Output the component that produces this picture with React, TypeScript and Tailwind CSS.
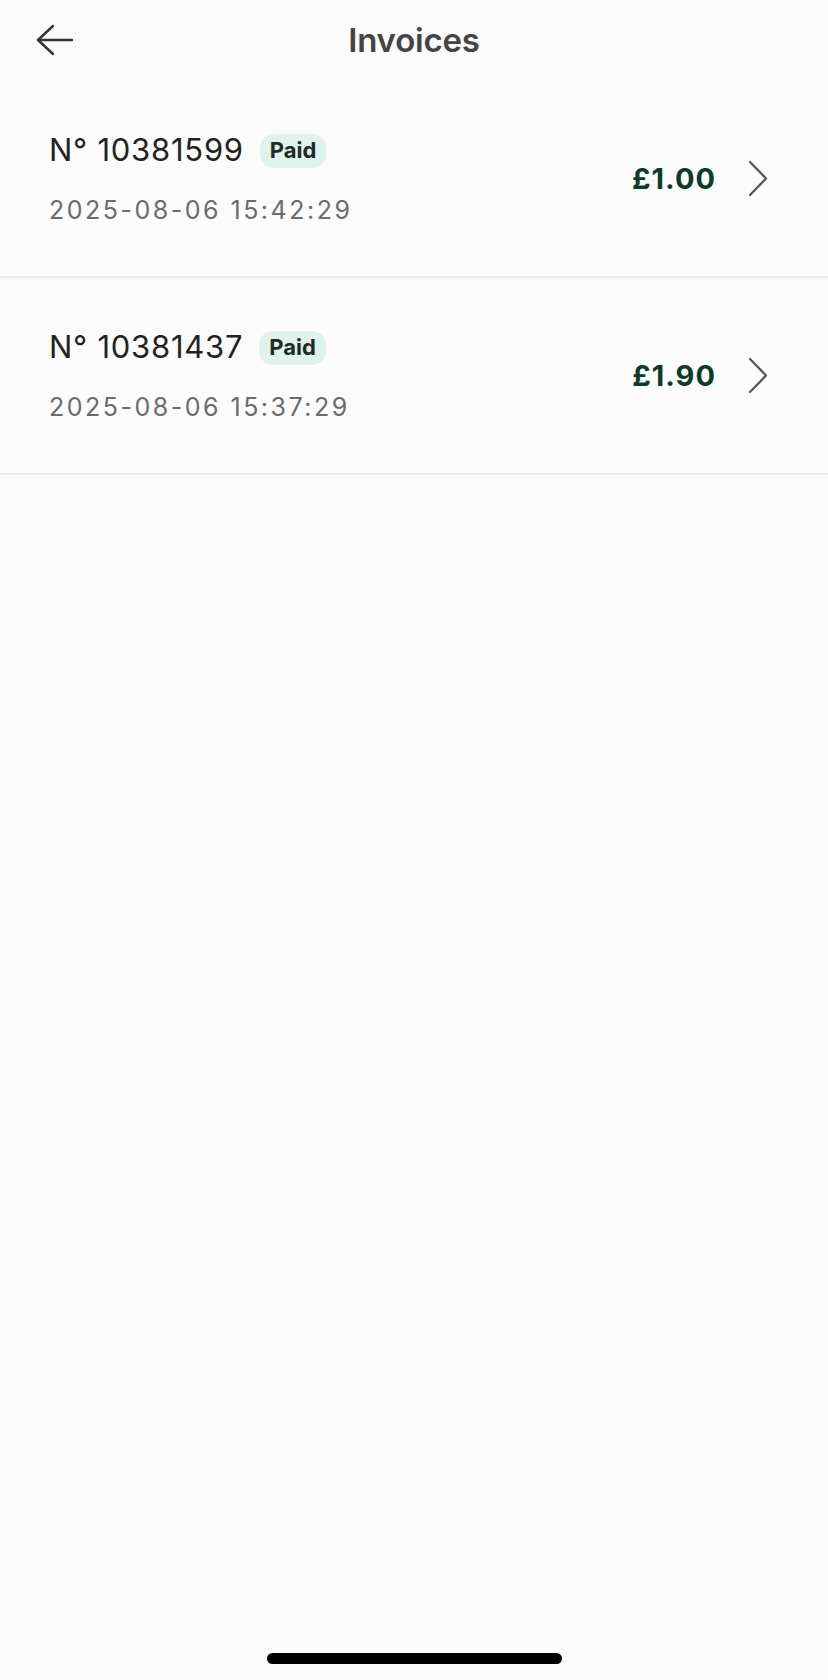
const invoices = [
  { id: "10381599", date: "2025-08-06 15:42:29", amount: "£1.00" },
  { id: "10381437", date: "2025-08-06 15:37:29", amount: "£1.90" },
];

function BackArrow() {
  return (
    <svg width="38" height="32" viewBox="0 0 38 32" fill="none" stroke="#333" strokeWidth="2.4" strokeLinecap="round" strokeLinejoin="round">
      <path d="M2 16 H36" />
      <path d="M17 2 L2 16 L17 30" />
    </svg>
  );
}

function Chevron() {
  return (
    <svg width="20" height="37" viewBox="0 0 20 37" fill="none" stroke="#555" strokeWidth="2.2" strokeLinecap="round" strokeLinejoin="round">
      <path d="M2 2 L18 18.5 L2 35" />
    </svg>
  );
}

export default function App() {
  return (
    <div className="flex h-[1680px] flex-col bg-[#fbfbfb] font-['Inter','Liberation_Sans',sans-serif]">
      <header className="relative flex h-[81px] items-center justify-center">
        <button className="absolute left-[36px] top-[24px]">
          <BackArrow />
        </button>
        <h1 className="text-[33px] font-semibold tracking-[-0.2px] text-[#444]">Invoices</h1>
      </header>

      <ul>
        {invoices.map((inv) => (
          <li
            key={inv.id}
            className="flex h-[197px] items-center justify-between border-b-2 border-[#ececec] pl-[49px] pr-[60px]"
          >
            <div className="flex flex-col">
              <div className="flex h-[36px] items-center gap-[16px]">
                <span className="text-[31px] font-normal tracking-[0.75px] text-[#222]">
                  N° {inv.id}
                </span>
                <span className="flex h-[34px] items-center rounded-[14px] bg-[#dff2eb] px-[10px] text-[22px] font-bold text-[#1d2b26]">
                  Paid
                </span>
              </div>
              <span className="mt-[26px] text-[25px] leading-[30px] tracking-[2.5px] text-[#6b6b6b]">
                {inv.date}
              </span>
            </div>
            <div className="flex items-center gap-[32px]">
              <span className="text-[29px] font-bold tracking-[1px] text-[#0e3a2c]">{inv.amount}</span>
              <Chevron />
            </div>
          </li>
        ))}
      </ul>

      <div className="flex-1" />
      <div className="flex justify-center pb-[16px]">
        <div className="h-[11px] w-[295px] rounded-full bg-black" />
      </div>
    </div>
  );
}
